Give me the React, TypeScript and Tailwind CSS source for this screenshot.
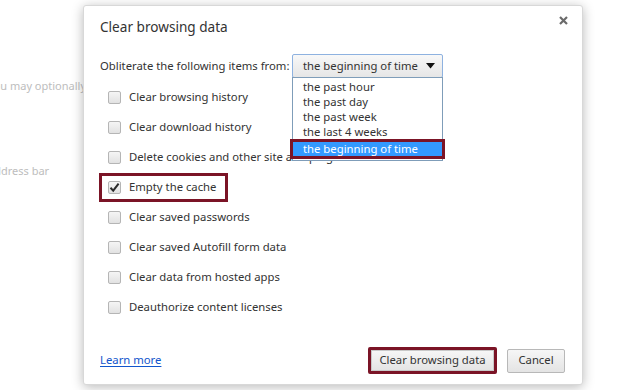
import React from 'react';

const OPTIONS: string[] = ['the past hour', 'the past day', 'the past week', 'the last 4 weeks', 'the beginning of time'];

const ITEMS: { label: string; checked: boolean }[] = [
  { label: 'Clear browsing history', checked: false },
  { label: 'Clear download history', checked: false },
  { label: 'Delete cookies and other site and plug-in data', checked: false },
  { label: 'Empty the cache', checked: true },
  { label: 'Clear saved passwords', checked: false },
  { label: 'Clear saved Autofill form data', checked: false },
  { label: 'Clear data from hosted apps', checked: false },
  { label: 'Deauthorize content licenses', checked: false },
];

const Checkbox = ({ checked }: { checked: boolean }) => (
  <span className="w-[13px] h-[13px] shrink-0 rounded-[2px] border border-[#b5b5b5] bg-gradient-to-b from-[#f5f5f5] to-[#e2e2e2] flex items-center justify-center">
    {checked && (
      <svg width="11" height="11" viewBox="0 0 11 11">
        <path d="M1.5 5.8 L4.2 8.6 L9.6 1.6" fill="none" stroke="#2a2a2a" strokeWidth="2" />
      </svg>
    )}
  </span>
);

const App: React.FC = () => {
  return (
    <div className="relative w-[625px] h-[390px] overflow-hidden bg-white font-['Noto_Sans',sans-serif] text-[11.3px] text-[#333] whitespace-nowrap">
      {/* page behind the dialog */}
      <div className="flex flex-col pt-[77px] text-[11px] text-[#bdbdbd]">
        <p className="-ml-[12px] leading-[18px]">you may optionally</p>
        <p className="-ml-[12px] mt-[67px] leading-[18px]">address bar</p>
      </div>

      {/* dialog */}
      <div className="absolute left-[83px] top-[5px] w-[500px] h-[380px] bg-white rounded-[3px] border border-[#d8d8d8] shadow-[0_2px_12px_rgba(0,0,0,0.28)] pl-[16px] pr-[17px] pt-[10px] flex flex-col">
        <div className="flex items-center justify-between h-[22px]">
          <h1 className="text-[13.6px] leading-[20px] text-[#333]">Clear browsing data</h1>
          <svg width="9" height="9" viewBox="0 0 9 9" className="-mr-[3px] -mt-[14px]">
            <path d="M1 1 L8 8 M8 1 L1 8" stroke="#6b6b6b" strokeWidth="2.2" />
          </svg>
        </div>

        <div className="flex items-center mt-[16px] h-[24px]">
          <span className="w-[192px] leading-[16px]">Obliterate the following items from:</span>
          <div className="relative">
            <div className="w-[151px] h-[24px] border border-[#8eb2e0] rounded-[2px] bg-gradient-to-b from-[#f8f8f8] to-[#e6e6e6] flex items-center justify-between pl-[10px] pr-[7px]">
              <span>the beginning of time</span>
              <svg width="9" height="6" viewBox="0 0 9 6">
                <path d="M0 0 H9 L4.5 5.5 Z" fill="#111" />
              </svg>
            </div>
            <div className="absolute left-0 top-[23px] w-[151px] border border-[#7f9db9] bg-white pt-[1px] pb-[1px] z-10">
              {OPTIONS.map((opt, i) =>
                i === OPTIONS.length - 1 ? (
                  <div key={opt} className="-mx-[3px] border-[3px] border-[#7b1426]">
                    <div className="h-[14px] bg-[#3399ff] text-white leading-[14px] pl-[10px]">{opt}</div>
                  </div>
                ) : (
                  <div key={opt} className="h-[15px] leading-[15px] pl-[10px]">{opt}</div>
                )
              )}
            </div>
          </div>
        </div>

        <div className="flex flex-col mt-[4px]">
          {ITEMS.map((item) => (
            <div key={item.label} className="h-[30px] flex items-center">
              {item.checked ? (
                <div className="-ml-[1px] flex items-center gap-[8px] border-[3px] border-[#7b1426] h-[29px] w-[129px] pl-[6px]">
                  <Checkbox checked />
                  <span>{item.label}</span>
                </div>
              ) : (
                <div className="flex items-center gap-[8px] pl-[8px]">
                  <Checkbox checked={false} />
                  <span>{item.label}</span>
                </div>
              )}
            </div>
          ))}
        </div>

        <div className="flex items-center justify-between mt-[25px]">
          <a className="text-[#1155cc] underline underline-offset-2">Learn more</a>
          <div className="flex items-center gap-[10px]">
            <div className="border-[3px] border-[#7b1426] rounded-[2px]">
              <button className="h-[21px] w-[123px] border border-[#c8c8c8] bg-gradient-to-b from-[#f6f6f6] to-[#e4e4e4] text-[#333]">
                Clear browsing data
              </button>
            </div>
            <button className="h-[24px] w-[58px] border border-[#b8b8b8] rounded-[2px] bg-gradient-to-b from-[#f6f6f6] to-[#e4e4e4] text-[#333]">
              Cancel
            </button>
          </div>
        </div>
      </div>
    </div>
  );
};

export default App;
